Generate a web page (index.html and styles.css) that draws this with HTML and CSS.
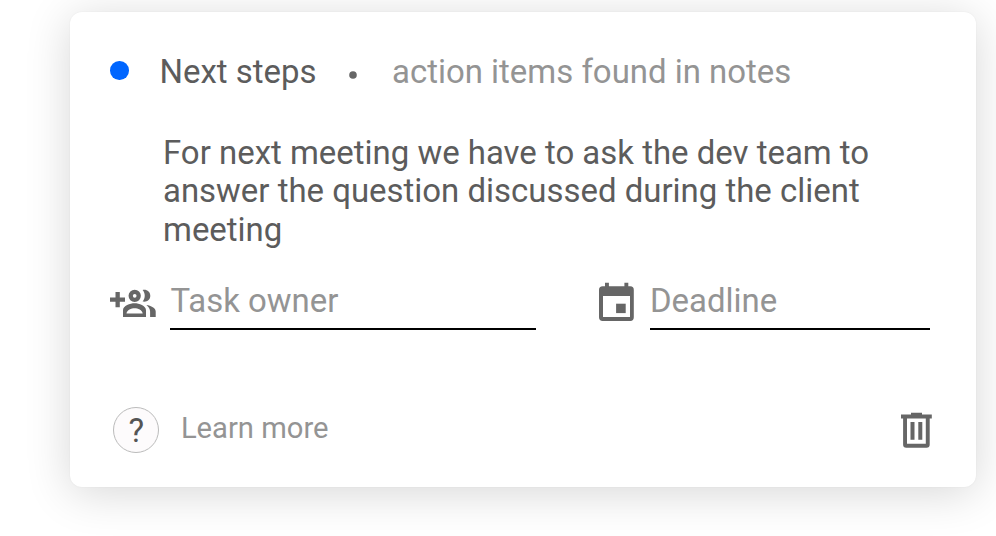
FILE: index.html
```html
<!DOCTYPE html>
<html lang="en">
<head>
<meta charset="utf-8">
<title>Next steps</title>
<link rel="stylesheet" href="styles.css">
</head>
<body>
<main class="card">
  <header class="heading">
    <span class="status"></span>
    <h1 class="title">Next steps</h1>
    <svg class="icon separator" width="8" height="8" viewBox="0 0 8 8" aria-hidden="true"><circle cx="4" cy="4" r="3.800"/></svg>
    <span class="subtitle">action items found in notes</span>
  </header>
  <p class="task">For next meeting we have to ask the dev team to answer the question discussed during the client meeting</p>
  <div class="fields">
    <label class="field owner">
      <svg class="icon" width="48" height="40" viewBox="0 0 48 40" aria-hidden="true">
        <path d="M5.500 12h4.300v5.600H15v4.200H9.800v5.500h-4.300v-5.500H0v-4.200h5.500z"/>
        <circle cx="24.700" cy="15.800" r="4" fill="none" stroke="currentColor" stroke-width="4.300"/>
        <path fill-rule="evenodd" d="M24.600 23.300c-4.500 0-11.600 2.300-11.600 7V37h23v-6.700c0-4.700-7-7-11.400-7zM16.500 33.600c.4-3.700 4.800-5.400 8.100-5.400s7.700 1.700 8.100 5.400z"/>
        <path d="M32.600 10c4.300-.8 7.700 1.700 7.700 5.800s-3.400 6.500-7.700 5.700c2.900-3.500 2.900-8 0-11.500z"/>
        <path d="M36.400 25c4.600.6 9.300 3 9.300 6.500V37h-5.600v-5.400c0-2.700-1.500-4.700-3.700-6.600z"/>
      </svg>
      <span class="input">Task owner</span>
    </label>
    <label class="field deadline">
      <svg class="icon" width="36" height="40" viewBox="0 0 36 40" aria-hidden="true">
        <path fill-rule="evenodd" d="M6 2.700h3.900v3.600h15.500V2.700h3.900v3.600h2q3.500 0 3.500 3.700V37.200q0 3.700-3.500 3.700H3.700Q0 40.900 0 37.200V10Q0 6.300 3.700 6.300H6zM4 16v20.900h27V16z"/>
        <rect x="17.100" y="23.700" width="9.600" height="9.400"/>
      </svg>
      <span class="input">Deadline</span>
    </label>
  </div>
  <footer class="footer">
    <a class="learn"><span class="help">?</span><span class="learn-text">Learn more</span></a>
    <svg class="icon trash" width="31" height="36" viewBox="0 0 31 36" aria-hidden="true">
      <path fill-rule="evenodd" d="M10 .8h11v1.800h9.800v3.900H28.700v26q0 3.200-3.200 3.200H5.300q-3.200 0-3.200-3.200v-26H0V2.600h10zM6 6.500v25.300h18.800V6.500z"/>
      <path d="M9.500 10h4v17.700h-4zM17.300 10h4v17.700h-4z"/>
    </svg>
  </footer>
</main>
</body>
</html>
```

FILE: styles.css
```css
* { box-sizing: border-box; }
body {
  margin: 0;
  padding: 12px 20.5px 48px 70px;
  height: 536px;
  overflow: hidden;
  background: #fff;
  color: #5c5c5c;
  font: 32.950px/38.600px Roboto, sans-serif;
}
.card {
  height: 475px;
  padding: 41px 43px 0 40px;
  border-radius: 12px;
  background: #fff;
  box-shadow: 0 6px 46px rgba(0, 0, 0, .16), 0 0 2px rgba(0, 0, 0, .06);
}
.heading { display: flex; align-items: center; height: 39px; }
.status { width: 18.500px; height: 18.500px; margin-top: -4px; border-radius: 50%; background: #0066ff; }
.title { margin: 0 0 0 31px; width: 156px; font: inherit; letter-spacing: 0; white-space: nowrap; }
.separator { margin: 4px 35px 0 33.500px; }
.subtitle { color: #949494; white-space: nowrap; }
.task { width: 730px; margin: 41.600px 0 0 53px; }
.fields { display: flex; height: 82px; margin-top: 30.400px; }
.field { display: flex; align-items: flex-start; }
.owner { width: 489px; gap: 12.400px; }
.deadline { gap: 15px; }
.icon { display: block; flex: none; fill: currentColor; color: #666; overflow: visible; }
.input { height: 50px; padding-top: 2px; border-bottom: 2px solid #000; color: #949494; white-space: nowrap; }
.owner .input { width: 366px; }
.deadline .input { width: 280px; }
.footer { display: flex; align-items: center; justify-content: space-between; height: 90px; margin-top: 23px; padding-right: 1px; }
.learn { display: flex; align-items: center; gap: 21.500px; margin-left: 3.400px; color: #949494; font-size: 29.200px; }
.help { width: 46px; height: 46px; border: 1px solid #bbb; border-radius: 50%; background: #fdfbfc; color: #555; font-size: 33px; line-height: 45px; text-align: center; }
.learn-text { margin-top: -2px; }
```
